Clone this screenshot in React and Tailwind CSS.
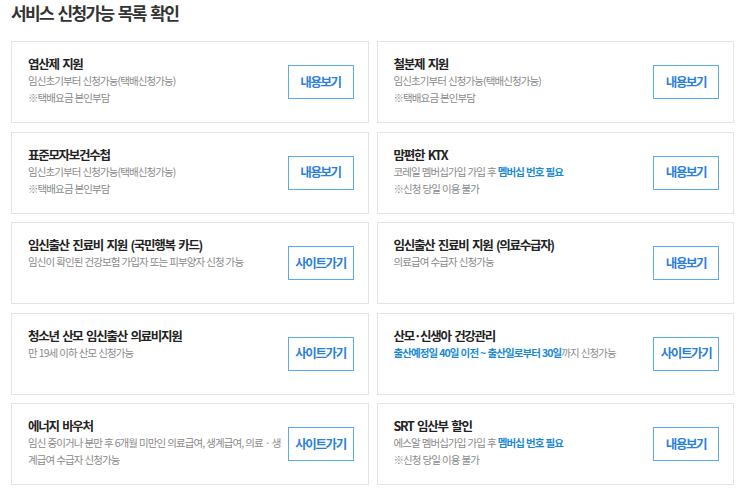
import React from "react";

const font = { fontFamily: '"Noto Sans CJK KR", "Noto Sans", sans-serif' };

const Hi = ({ children }) => (
  <span className="font-bold text-[#1b8ad6]">{children}</span>
);

const services = [
  {
    title: "엽산제 지원",
    lines: ["임신초기부터 신청가능(택배신청가능)", "※택배요금 본인부담"],
    btn: "내용보기",
  },
  {
    title: "철분제 지원",
    lines: ["임신초기부터 신청가능(택배신청가능)", "※택배요금 본인부담"],
    btn: "내용보기",
  },
  {
    title: "표준모자보건수첩",
    lines: ["임신초기부터 신청가능(택배신청가능)", "※택배요금 본인부담"],
    btn: "내용보기",
  },
  {
    title: "맘편한 KTX",
    lines: [
      <>
        코레일 멤버십가입 가입 후 <Hi>멤버십 번호 필요</Hi>
      </>,
      "※신청 당일 이용 불가",
    ],
    btn: "내용보기",
  },
  {
    title: "임신출산 진료비 지원 (국민행복 카드)",
    lines: ["임신이 확인된 건강보험 가입자 또는 피부양자 신청 가능"],
    btn: "사이트가기",
  },
  {
    title: "임신출산 진료비 지원 (의료수급자)",
    lines: ["의료급여 수급자 신청가능"],
    btn: "내용보기",
  },
  {
    title: "청소년 산모 임신출산 의료비지원",
    lines: ["만 19세 이하 산모 신청가능"],
    btn: "사이트가기",
  },
  {
    title: "산모·신생아 건강관리",
    lines: [
      <>
        <Hi>출산예정일 40일 이전 ~ 출산일로부터 30일</Hi>까지 신청가능
      </>,
    ],
    btn: "사이트가기",
  },
  {
    title: "에너지 바우처",
    lines: [
      "임신 중이거나 분만 후 6개월 미만인 의료급여, 생계급여, 의료 · 생계급여 수급자 신청가능",
    ],
    btn: "사이트가기",
  },
  {
    title: "SRT 임산부 할인",
    lines: [
      <>
        에스알 멤버십가입 가입 후 <Hi>멤버십 번호 필요</Hi>
      </>,
      "※신청 당일 이용 불가",
    ],
    btn: "내용보기",
  },
];

function Card({ item }) {
  return (
    <div className="flex h-[82px] items-center border border-[#e4e4e4] bg-white pl-[16px] pr-[14px]">
      <div className="min-w-0 flex-1 self-start pt-[13px] pr-[4px]">
        <div className="text-[12.5px] font-bold leading-[17px] tracking-[-1.3px] text-[#222] [word-spacing:2px]">
          {item.title}
        </div>
        {item.lines.map((l, i) => (
          <div
            key={i}
            className="text-[10.5px] leading-[17px] tracking-[-0.9px] text-[#8a8a8a] [word-spacing:0.5px]"
          >
            {l}
          </div>
        ))}
      </div>
      <button className="flex h-[34px] w-[66px] shrink-0 items-center justify-center border border-[#5aaaf0] bg-white text-[12.5px] font-bold tracking-[-1.4px] text-[#2b7fdc]">
        {item.btn}
      </button>
    </div>
  );
}

export default function App() {
  return (
    <div className="min-h-[490px] w-[743px] bg-white" style={font}>
      <h2 className="pl-[11px] pt-[1px] text-[17px] font-bold leading-[24px] tracking-[-1.6px] text-[#333] [word-spacing:2px]">
        서비스 신청가능 목록 확인
      </h2>
      <div className="mt-[16px] grid grid-cols-2 gap-x-[8px] gap-y-[8.5px] pl-[11px] pr-[9px]">
        {services.map((s, i) => (
          <Card key={i} item={s} />
        ))}
      </div>
    </div>
  );
}
